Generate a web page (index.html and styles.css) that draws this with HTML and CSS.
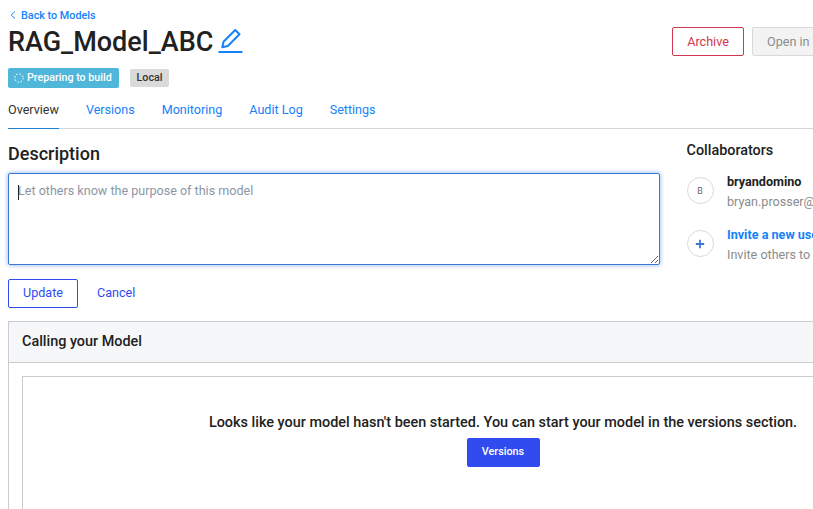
FILE: index.html
```html
<!DOCTYPE html>
<html lang="en">
<head>
<meta charset="utf-8">
<title>RAG_Model_ABC</title>
<link rel="stylesheet" href="styles.css">
</head>
<body>
<main class="page">
  <header class="head">
    <div class="head-main">
      <a class="back"><svg class="chevron" width="6" height="8" viewBox="0 0 6 8"><path d="M5 .5 1.2 4 5 7.5" fill="none" stroke="currentColor"/></svg><span>Back to Models</span></a>
      <div class="title-row">
        <h1>RAG_Model_ABC</h1>
        <svg class="edit" width="26" height="26" viewBox="0 0 26 26" fill="none" stroke="currentColor"><path d="M.5 24h24" stroke-width="2"/><path d="M4.3 19.2 5.5 13.7 17.2 2 21.5 6.3 9.8 18Z" stroke-width="2" stroke-linejoin="round"/></svg>
      </div>
      <div class="badges">
        <span class="badge building"><svg width="10" height="10" viewBox="0 0 10 10"><circle cx="5" cy="5" r="4.1" fill="none" stroke="#fff" stroke-width="1.4" stroke-dasharray="1.4 1.82" opacity=".8"/></svg><span>Preparing to build</span></span>
        <span class="badge local">Local</span>
      </div>
    </div>
    <div class="actions">
      <button class="btn danger">Archive</button>
      <button class="btn disabled">Open in Workspace</button>
    </div>
  </header>
  <nav class="tabs">
    <a class="active">Overview</a><a>Versions</a><a>Monitoring</a><a>Audit Log</a><a>Settings</a>
  </nav>
  <div class="columns">
    <section class="description">
      <h2>Description</h2>
      <div class="field"><textarea placeholder="Let others know the purpose of this model"></textarea><i class="caret"></i></div>
      <div class="form-actions"><button class="btn update">Update</button><button class="btn cancel">Cancel</button></div>
    </section>
    <aside class="people">
      <h3>Collaborators</h3>
      <div class="person"><span class="avatar">B</span><div><strong>bryandomino</strong><p>bryan.prosser@dominodatalab.com</p></div></div>
      <div class="person"><span class="avatar"><svg width="10" height="10" viewBox="0 0 10 10"><path d="M5 .8v8.4M.8 5h8.4" stroke="#3b78d0" stroke-width="1.8"/></svg></span><div><strong class="invite">Invite a new user</strong><p>Invite others to collaborate</p></div></div>
    </aside>
  </div>
  <section class="panel">
    <h3>Calling your Model</h3>
    <div class="panel-body">
      <div class="empty"><p>Looks like your model hasn't been started. You can start your model in the versions section.</p><button class="btn primary">Versions</button></div>
    </div>
  </section>
</main>
</body>
</html>
```
FILE: styles.css
```css
* { box-sizing: border-box; }
html { overflow: hidden; }
body { margin: 0; height: 509px; overflow: hidden; background: #fff; color: #212121; font: 12.57px/20px Roboto, sans-serif; }
h1, h2, h3, p { margin: 0; font-weight: 500; }
.page { width: 1006px; height: 509px; padding: 0 8px; overflow: hidden; }
.head { display: flex; height: 92px; }
.head-main { width: 664px; }
.back { display: flex; align-items: center; height: 14px; margin-top: 9px; padding-left: 2px; gap: 5px; color: #1482fa; font-size: 10.8px; font-weight: 500; }
.chevron { margin-top: -3px; }
.title-row { display: flex; height: 38px; gap: 5px; }
h1 { font-size: 27px; line-height: 38px; }
.edit { margin-top: 5px; color: #1482fa; }
.badges { display: flex; align-items: center; gap: 11px; margin-top: 7px; height: 20px; }
.badge { display: flex; align-items: center; border-radius: 2px; font-size: 10.7px; font-weight: 500; }
.building { width: 111px; height: 20px; padding-left: 6px; gap: 3px; background: #50b6da; color: #fff; }
.local { width: 39px; height: 18px; justify-content: center; background: #dadada; color: #333; }
.actions { display: flex; gap: 8px; padding-top: 27px; }
.btn { height: 29px; padding: 0 14px; border: 1px solid; border-radius: 2px; background: #fff; font: 12.6px/20px Roboto, sans-serif; white-space: nowrap; }
.danger { width: 72px; color: #d0384f; }
.disabled { background: #f3f3f3; border-color: #d9d9d9; color: #8c8c8c; }
.tabs { display: flex; gap: 27px; height: 37px; margin-right: -8px; border-bottom: 1px solid #d5d5d5; color: #1482fa; }
.tabs a { height: 37px; padding-top: 8px; }
.tabs .active { border-bottom: 1px solid #1b7fd4; color: #333; }
.columns { display: flex; height: 192px; }
.description { width: 652px; }
h2 { height: 44px; padding-top: 13px; font-size: 18px; line-height: 24px; }
.field { position: relative; height: 92px; }
textarea { display: block; width: 652px; height: 92px; padding: 7px 9px; border: 1px solid #3b78d0; border-radius: 2px; outline: 0; box-shadow: 0 0 5px #86aff0; font: 12.57px/20px Roboto, sans-serif; resize: both; }
textarea::placeholder { color: #8c97a5; }
.caret { position: absolute; left: 10px; top: 12px; width: 1px; height: 15px; background: #222; }
.form-actions { display: flex; margin-top: 14px; gap: 4px; }
.form-actions .btn { padding-bottom: 2px; }
.update { width: 70px; color: #304cf0; }
.cancel { border-color: transparent; color: #304cf0; }
.people { margin-left: 26.5px; width: 300px; }
.people h3 { height: 43px; padding-top: 12px; font-size: 14.4px; line-height: 20px; }
.person { display: flex; gap: 13.5px; height: 53px; white-space: nowrap; }
.avatar { display: flex; align-items: center; justify-content: center; width: 27px; height: 27px; margin-top: 5px; border: 1px solid #d9d9d9; border-radius: 50%; color: #666; font-size: 9px; }
.person strong { display: block; font-weight: 700; font-size: 12.6px; }
.person .invite { color: #1482fa; }
.person p { color: #8c8c8c; font-weight: 400; }
.panel { width: 990px; height: 240px; border: 1px solid #c9cdd1; }
.panel h3 { height: 41px; padding: 10px 13px; border-bottom: 1px solid #c9cdd1; background: #f6f7f9; font-size: 14.4px; }
.panel-body { padding: 13px; }
.empty { display: flex; flex-direction: column; align-items: center; height: 180px; padding-top: 36px; border: 1px solid #c9cdd1; font-size: 14.43px; }
.primary { width: 73px; margin-top: 5px; padding-bottom: 2px; border-color: #304cf0; background: #304cf0; color: #fff; font-size: 10.8px; font-weight: 500; }
```
